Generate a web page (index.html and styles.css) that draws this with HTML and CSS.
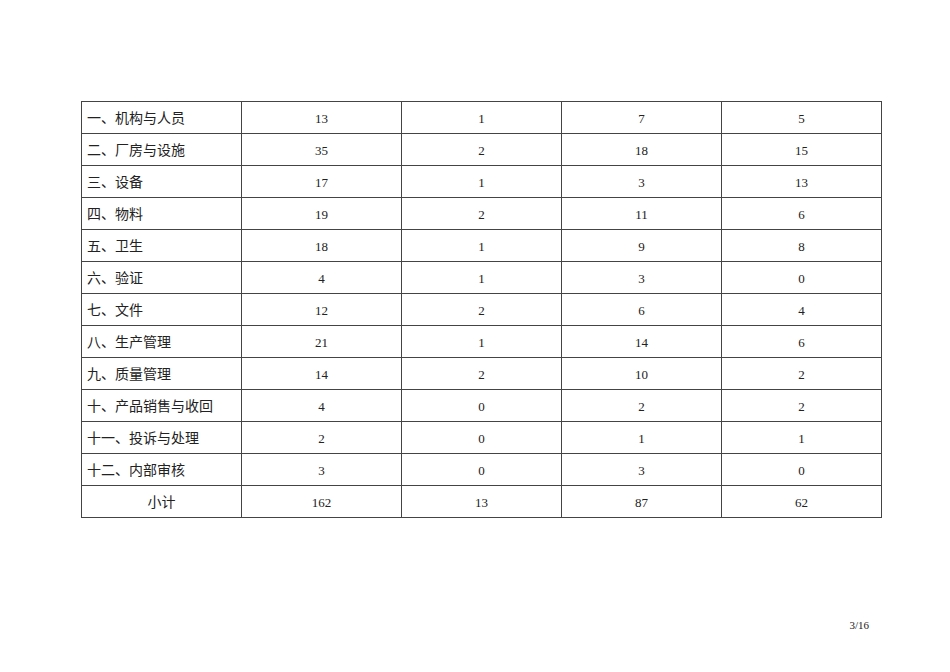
FILE: index.html
```html
<!DOCTYPE html>
<html lang="zh">
<head>
<meta charset="utf-8">
<link rel="stylesheet" href="styles.css">
</head>
<body>
<div class="page">
<table class="grid">
<colgroup><col><col><col><col><col></colgroup>
<tbody>
<tr><td class="name">一、机构与人员</td><td>13</td><td>1</td><td>7</td><td>5</td></tr>
<tr><td class="name">二、厂房与设施</td><td>35</td><td>2</td><td>18</td><td>15</td></tr>
<tr><td class="name">三、设备</td><td>17</td><td>1</td><td>3</td><td>13</td></tr>
<tr><td class="name">四、物料</td><td>19</td><td>2</td><td>11</td><td>6</td></tr>
<tr><td class="name">五、卫生</td><td>18</td><td>1</td><td>9</td><td>8</td></tr>
<tr><td class="name">六、验证</td><td>4</td><td>1</td><td>3</td><td>0</td></tr>
<tr><td class="name">七、文件</td><td>12</td><td>2</td><td>6</td><td>4</td></tr>
<tr><td class="name">八、生产管理</td><td>21</td><td>1</td><td>14</td><td>6</td></tr>
<tr><td class="name">九、质量管理</td><td>14</td><td>2</td><td>10</td><td>2</td></tr>
<tr><td class="name">十、产品销售与收回</td><td>4</td><td>0</td><td>2</td><td>2</td></tr>
<tr><td class="name">十一、投诉与处理</td><td>2</td><td>0</td><td>1</td><td>1</td></tr>
<tr><td class="name">十二、内部审核</td><td>3</td><td>0</td><td>3</td><td>0</td></tr>
<tr><td class="total">小计</td><td>162</td><td>13</td><td>87</td><td>62</td></tr>
</tbody>
</table>
<div class="pagenum">3/16</div>
</div>
</body>
</html>
```
FILE: styles.css
```css
html, body {
  margin: 0;
  padding: 0;
  background: #fff;
}
body {
  font-family: "Liberation Serif", "Noto Sans CJK SC", serif;
  color: #222;
}
.page {
  width: 950px;
  height: 672px;
  box-sizing: border-box;
  padding: 101px 68px 0 81px;
  display: flex;
  flex-direction: column;
}
.grid {
  border-collapse: collapse;
  table-layout: fixed;
  width: 801px;
}
.grid col {
  width: 160px;
}
.grid td {
  border: 1px solid #444;
  height: 29px;
  padding: 2px 0 0 0;
  text-align: center;
  vertical-align: middle;
  font-size: 13px;
  line-height: 16px;
}
.grid td.name {
  text-align: left;
  padding-left: 5px;
  font-size: 14px;
}
.grid td.total {
  font-size: 14px;
}
.pagenum {
  margin-top: 100px;
  margin-right: 13px;
  align-self: flex-end;
  font-size: 11px;
  line-height: 14px;
}
```
